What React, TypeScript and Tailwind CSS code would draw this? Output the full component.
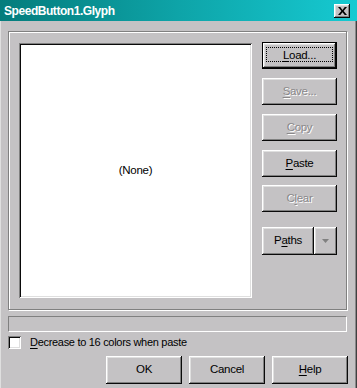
import React from "react";

const raised =
  "shadow-[inset_-1px_-1px_#0a0a0a,inset_1px_1px_#ffffff,inset_-2px_-2px_#808080,inset_2px_2px_#dfdfdf]";
const sunken =
  "shadow-[inset_1px_1px_#808080,inset_-1px_-1px_#ffffff,inset_2px_2px_#0a0a0a,inset_-2px_-2px_#dfdfdf]";

type BtnProps = {
  label: string;
  u?: number;
  disabled?: boolean;
  className?: string;
};

const Label = ({ label, u, disabled }: BtnProps) => {
  const parts =
    u === undefined
      ? [label]
      : [label.slice(0, u), label.slice(u, u + 1), label.slice(u + 1)];
  return (
    <span
      className={
        disabled
          ? "text-[#8a888a] [text-shadow:1px_1px_0_#ffffff]"
          : "text-black"
      }
    >
      {u === undefined ? (
        parts[0]
      ) : (
        <>
          {parts[0]}
          <span className="underline underline-offset-2">{parts[1]}</span>
          {parts[2]}
        </>
      )}
    </span>
  );
};

const Btn = ({ label, u, disabled, className = "" }: BtnProps) => (
  <button
    className={`flex items-center justify-center bg-[#c4c2c4] text-[11.5px] tracking-[-0.3px] ${raised} ${className}`}
  >
    <Label label={label} u={u} disabled={disabled} />
  </button>
);

export default function App() {
  return (
    <div className="w-[357px] h-[388px] bg-[#c4c2c4] flex flex-col font-['Liberation_Sans',Arial,sans-serif] shadow-[inset_-1px_0_#404040,inset_-2px_0_#8a888a,inset_1px_0_#dfdfdf]">
      {/* title bar */}
      <div className="h-[21px] flex items-center justify-between pl-[4px] pr-[7px] bg-gradient-to-r from-[#057c7c] via-[#0ea4a8] to-[#16cad2]">
        <span className="text-white font-bold text-[12px] tracking-[-0.45px]">
          SpeedButton1.Glyph
        </span>
        <div
          className={`w-[16px] h-[14px] bg-[#c4c2c4] flex items-center justify-center ${raised}`}
        >
          <svg width="9" height="8" viewBox="0 0 8 7">
            <path d="M0 0h2l2 2.5L6 0h2L5 3.5 8 7H6L4 4.5 2 7H0l3-3.5z" fill="#000" />
          </svg>
        </div>
      </div>

      <div className="flex flex-col px-[8px] pt-[10px]">
        {/* group box */}
        <div className="h-[279px] w-[339px] border border-[#808080] shadow-[1px_1px_0_#ffffff,inset_1px_1px_0_#ffffff] flex pl-[10px] pt-[11px]">
          <div
            className={`w-[233px] h-[255px] bg-white flex items-center justify-center text-[11.5px] tracking-[-0.3px] text-black ${sunken}`}
          >
            (None)
          </div>
          <div className="ml-[10px] -mt-[1px] flex flex-col w-[75px]">
            <div className="h-[27px] border border-black">
              <Btn label="Load..." u={0} className="w-full h-full relative" />
              <div className="relative -mt-[21px] mx-[3px] h-[15px] border border-dotted border-black pointer-events-none" />
            </div>
            <Btn label="Save..." u={0} disabled className="h-[27px] mt-[9px]" />
            <Btn label="Copy" u={0} disabled className="h-[27px] mt-[9px]" />
            <Btn label="Paste" u={0} className="h-[27px] mt-[9px]" />
            <Btn label="Clear" u={1} disabled className="h-[27px] mt-[8px]" />
            <div className="flex mt-[15px] h-[28px]">
              <Btn label="Paths" u={1} className="w-[52px] h-full" />
              <button
                className={`w-[23px] h-full flex items-center justify-center bg-[#c4c2c4] ${raised}`}
              >
                <svg width="7" height="4" viewBox="0 0 7 4">
                  <path d="M0 0h7L3.5 4z" fill="#808080" />
                </svg>
              </button>
            </div>
          </div>
        </div>

        {/* progress bar */}
        <div className="mt-[6px] h-[16px] w-[339px] border-t border-l border-[#808080] border-b border-r border-b-white border-r-white" />

        {/* checkbox */}
        <div className="mt-[3px] flex items-center h-[14px]">
          <div className={`w-[13px] h-[13px] bg-white ${sunken}`} />
          <span className="ml-[9px] text-[11px] tracking-[-0.3px] text-black">
            <Label label="Decrease to 16 colors when paste" u={0} />
          </span>
        </div>

        {/* bottom buttons */}
        <div className="mt-[7px] flex justify-end gap-[7px] pr-[1px]">
          <Btn label="OK" className="w-[76px] h-[28px]" />
          <Btn label="Cancel" className="w-[76px] h-[28px]" />
          <Btn label="Help" u={0} className="w-[76px] h-[28px]" />
        </div>
      </div>
    </div>
  );
}
